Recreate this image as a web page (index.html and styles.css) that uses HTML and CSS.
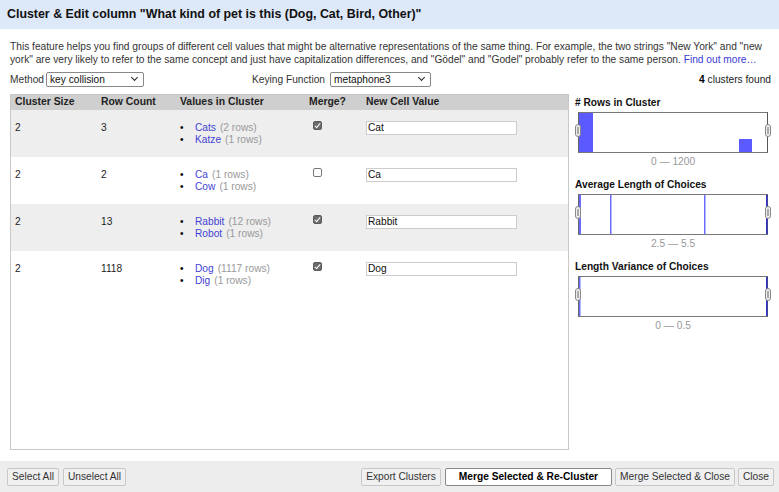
FILE: index.html
```html
<!DOCTYPE html>
<html>
<head>
<meta charset="utf-8">
<link rel="stylesheet" href="styles.css">
</head>
<body>
<div class="dialog">
  <div class="header">Cluster &amp; Edit column "What kind of pet is this (Dog, Cat, Bird, Other)"</div>
  <div class="body">
    <p class="desc">This feature helps you find groups of different cell values that might be alternative representations of the same thing. For example, the two strings "New York" and "new york" are very likely to refer to the same concept and just have capitalization differences, and "Gödel" and "Godel" probably refer to the same person. <a class="link">Find out more…</a></p>
    <div class="controls">
      <div class="ctl">Method <span class="select sel-method">key collision<i class="chev"></i></span></div>
      <div class="ctl ctl-key">Keying Function <span class="select sel-key">metaphone3<i class="chev"></i></span></div>
      <div class="found"><b>4</b> clusters found</div>
    </div>
    <div class="main">
      <div class="tableframe">
        <div class="row head">
          <div class="c1">Cluster Size</div>
          <div class="c2">Row Count</div>
          <div class="c3">Values in Cluster</div>
          <div class="c4">Merge?</div>
          <div class="c5">New Cell Value</div>
        </div>
        <div class="row odd">
          <div class="c1">2</div>
          <div class="c2">3</div>
          <div class="c3"><ul><li><a>Cats</a> <span class="cnt">(2 rows)</span></li><li><a>Katze</a> <span class="cnt">(1 rows)</span></li></ul></div>
          <div class="c4"><span class="cb on"></span></div>
          <div class="c5"><span class="input">Cat</span></div>
        </div>
        <div class="row">
          <div class="c1">2</div>
          <div class="c2">2</div>
          <div class="c3"><ul><li><a>Ca</a> <span class="cnt">(1 rows)</span></li><li><a>Cow</a> <span class="cnt">(1 rows)</span></li></ul></div>
          <div class="c4"><span class="cb"></span></div>
          <div class="c5"><span class="input">Ca</span></div>
        </div>
        <div class="row odd">
          <div class="c1">2</div>
          <div class="c2">13</div>
          <div class="c3"><ul><li><a>Rabbit</a> <span class="cnt">(12 rows)</span></li><li><a>Robot</a> <span class="cnt">(1 rows)</span></li></ul></div>
          <div class="c4"><span class="cb on"></span></div>
          <div class="c5"><span class="input">Rabbit</span></div>
        </div>
        <div class="row">
          <div class="c1">2</div>
          <div class="c2">1118</div>
          <div class="c3"><ul><li><a>Dog</a> <span class="cnt">(1117 rows)</span></li><li><a>Dig</a> <span class="cnt">(1 rows)</span></li></ul></div>
          <div class="c4"><span class="cb on"></span></div>
          <div class="c5"><span class="input">Dog</span></div>
        </div>
      </div>
      <div class="side">
        <div class="facet">
          <div class="ftitle"># Rows in Cluster</div>
          <div class="hist">
            <svg width="190" height="41" viewBox="0 0 190 41">
              <rect x="1" y="1" width="14" height="39" fill="#5a5aff"/>
              <rect x="161" y="27" width="13" height="13" fill="#5a5aff"/>
            </svg>
            <span class="handle hl"></span><span class="handle hr"></span>
          </div>
          <div class="range">0 — 1200</div>
        </div>
        <div class="facet">
          <div class="ftitle">Average Length of Choices</div>
          <div class="hist">
            <svg width="190" height="41" viewBox="0 0 190 41">
              <rect x="1" y="1" width="2" height="39" fill="#6b6bff"/>
              <rect x="32" y="1" width="1.5" height="39" fill="#6b6bff"/>
              <rect x="126" y="1" width="1.5" height="39" fill="#6b6bff"/>
              <rect x="188" y="1" width="1.5" height="39" fill="#3333cc"/>
            </svg>
            <span class="handle hl"></span><span class="handle hr"></span>
          </div>
          <div class="range">2.5 — 5.5</div>
        </div>
        <div class="facet">
          <div class="ftitle">Length Variance of Choices</div>
          <div class="hist">
            <svg width="190" height="41" viewBox="0 0 190 41">
              <rect x="1" y="1" width="1.5" height="39" fill="#6b6bff"/>
              <rect x="188" y="1" width="1.5" height="39" fill="#3333cc"/>
            </svg>
            <span class="handle hl"></span><span class="handle hr"></span>
          </div>
          <div class="range">0 — 0.5</div>
        </div>
      </div>
    </div>
  </div>
  <div class="footer">
    <div class="left">
      <span class="btn">Select All</span>
      <span class="btn">Unselect All</span>
    </div>
    <div class="right">
      <span class="btn">Export Clusters</span>
      <span class="btn primary">Merge Selected &amp; Re-Cluster</span>
      <span class="btn">Merge Selected &amp; Close</span>
      <span class="btn">Close</span>
    </div>
  </div>
</div>
</body>
</html>
```

FILE: styles.css
```css
* { box-sizing: border-box; }
html, body { margin: 0; padding: 0; background: #fff; }
body {
  font-family: "Liberation Sans", Arial, sans-serif;
  font-size: 10.2px;
  color: #222;
  width: 779px;
  height: 492px;
  overflow: hidden;
}
.dialog { display: flex; flex-direction: column; height: 492px; }
.header {
  background: #dde8f8;
  height: 29px;
  padding: 6px 7px 0;
  font-size: 12.4px;
  line-height: 16px;
  font-weight: bold;
  color: #111;
}
.body { flex: 1; padding: 0 7px 0 10px; display: flex; flex-direction: column; }
.desc {
  margin: 12px 0 0;
  line-height: 12.6px;
  color: #333;
}
.link { color: #3a3ad6; }
.controls {
  display: flex;
  align-items: center;
  height: 16px;
  margin-top: 5px;
  color: #333;
}
.ctl { display: flex; align-items: center; gap: 2px; }
.ctl-key { margin-left: 108px; }
.found { margin-left: auto; margin-right: 1px; color: #222; }
.found b { color: #000; }
.select {
  position: relative;
  display: inline-block;
  height: 15px;
  border: 1px solid #888;
  border-radius: 2px;
  padding: 0 0 0 3px;
  line-height: 13px;
  color: #111;
  background: #fff;
}
.sel-method { width: 98px; }
.sel-key { width: 101px; margin-left: 3px; }
.chev {
  position: absolute;
  right: 6px;
  top: 2px;
  width: 5px;
  height: 5px;
  border-right: 1.5px solid #222;
  border-bottom: 1.5px solid #222;
  transform: rotate(45deg);
}
.main { display: flex; margin-top: 7px; gap: 6px; }
.tableframe {
  flex: 0 0 559px;
  height: 356px;
  border: 1px solid #c8c8c8;
  background: #fff;
}
.row { display: flex; height: 47px; padding-top: 12px; line-height: 12px; }
.row.odd { background: #eeeeee; }
.row.head {
  background: #cfcfcf;
  height: 15px;
  padding-top: 1px;
  font-weight: bold;
  font-size: 10.4px;
  color: #222;
}
.c1 { width: 90px; padding-left: 4px; }
.c2 { width: 79px; }
.c3 { width: 128px; }
.c4 { width: 58px; padding-left: 5px; }
.c5 { flex: 1; }
.row.head .c4 { padding-left: 1px; }
ul { margin: 0; padding: 0; list-style: none; line-height: 12px; }
li { display: flex; }
li::before {
  content: "•";
  width: 15px;
  color: #000;
  font-size: 10px;
}
li a { color: #4444d4; }
.cnt { color: #999; margin-left: 4px; }
.cb {
  display: inline-block;
  width: 9px;
  height: 9px;
  margin-top: -1px;
  border: 1px solid #777;
  border-radius: 2px;
  background: #fff;
  position: relative;
  vertical-align: top;
}
.cb.on { background: #6c6c6c; border-color: #5a5a5a; }
.cb.on::after {
  content: "";
  position: absolute;
  left: 2px;
  top: 0px;
  width: 2px;
  height: 5px;
  border-right: 1.5px solid #fff;
  border-bottom: 1.5px solid #fff;
  transform: rotate(40deg);
}
.input {
  display: block;
  width: 151px;
  height: 14px;
  margin-top: -1px;
  border: 1px solid #ccc;
  background: #fff;
  padding-left: 1px;
  line-height: 12px;
  color: #111;
}
.side { flex: 1; min-width: 0; }
.ftitle { font-weight: bold; color: #111; height: 14px; line-height: 14px; margin-top: 2px; }
.facet + .facet .ftitle { margin-top: 9px; }
.hist {
  position: relative;
  width: 190px;
  height: 41px;
  margin-left: 3px;
  margin-top: 2px;
  border: 1px solid #777;
  border-left-color: #666;
  border-right-color: #555;
}
.hist svg { position: absolute; left: -1px; top: -1px; }
.handle {
  position: absolute;
  top: 11px;
  width: 6px;
  height: 13px;
  border: 1px solid #888;
  border-radius: 3px;
  background: #eee;
}
.handle::after {
  content: "";
  position: absolute;
  left: 1px; top: 2px;
  width: 2px; height: 7px;
  background: #aaa;
}
.hl { left: -4px; }
.hr { right: -4px; }
.range {
  text-align: center;
  color: #999;
  height: 14px;
  line-height: 14px;
  margin-top: 2px;
  padding-left: 3px;
  width: 193px;
}
.footer {
  background: #ededed;
  height: 31px;
  display: flex;
  justify-content: space-between;
  align-items: flex-start;
  padding: 7px 5px 0 7px;
}
.left { display: flex; gap: 4px; }
.right { display: flex; gap: 3px; }
.btn {
  display: inline-block;
  height: 18px;
  line-height: 16px;
  padding: 0 4px;
  border: 1px solid #c8c8c8;
  background: #f0f0f0;
  color: #333;
  border-radius: 2px;
}
.btn.primary {
  background: #fff;
  border-color: #888;
  color: #000;
  font-weight: bold;
  padding: 0 13px;
  margin-left: 1px;
}
```
